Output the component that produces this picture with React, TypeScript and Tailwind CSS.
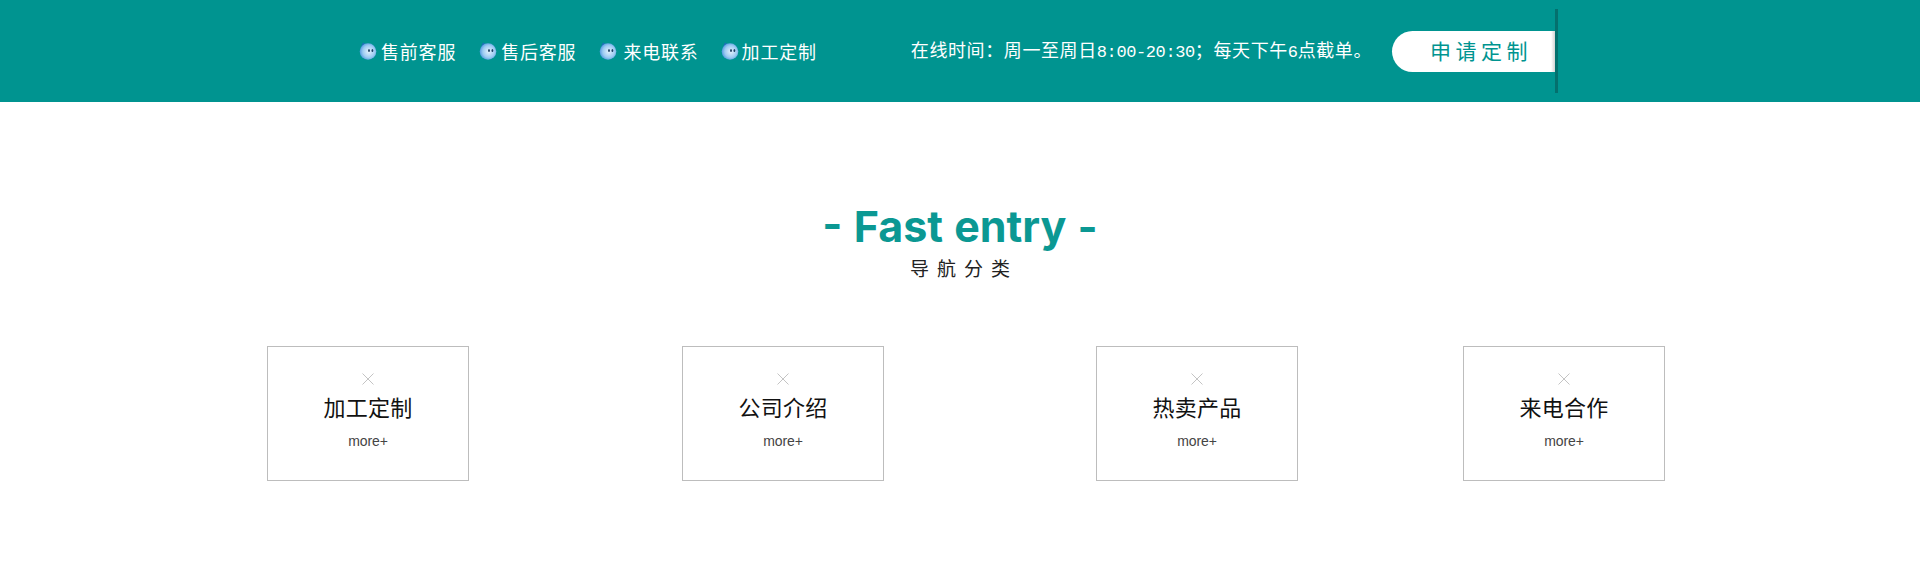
const CJK = "font-['Noto_Sans_CJK_SC','Liberation_Sans',sans-serif]";

const links = [
  { label: "售前客服", gap: "w-[4px]", next: "mr-[23px]" },
  { label: "售后客服", gap: "w-[4px]", next: "mr-[23px]" },
  { label: "来电联系", gap: "w-[6px]", next: "mr-[22px]" },
  { label: "加工定制", gap: "w-[3px]", next: "" },
];

const cards = [
  { title: "公司介绍", margin: "ml-[213px]" },
  { title: "热卖产品", margin: "ml-[212px]" },
  { title: "来电合作", margin: "ml-[165px]" },
];

function QqIcon() {
  return (
    <svg width="18" height="18" viewBox="0 0 18 18" className="shrink-0">
      <defs>
        <radialGradient id="ball" cx="0.55" cy="0.5" r="0.6">
          <stop offset="0" stopColor="#e4f2fd" />
          <stop offset="0.6" stopColor="#9ccbf2" />
          <stop offset="1" stopColor="#3f8ddb" />
        </radialGradient>
      </defs>
      <path d="M2 5 L4 0.5 L7 2.5 Z" fill="#1f6fb8" />
      <circle cx="9" cy="9.5" r="8.3" fill="url(#ball)" />
      <ellipse cx="10" cy="8.5" rx="0.9" ry="1.6" fill="#1d3f63" />
      <ellipse cx="13.4" cy="8.5" rx="0.9" ry="1.6" fill="#1d3f63" />
    </svg>
  );
}

function Card({ title, margin }: { title: string; margin?: string }) {
  return (
    <div className={`${margin ?? ""} flex h-[135px] w-[202px] flex-col items-center border border-[#bdbdbd] pt-[26px]`}>
      <svg width="12" height="12" viewBox="0 0 12 12" className="shrink-0">
        <path d="M0.5 0.5 L11.5 11.5 M11.5 0.5 L0.5 11.5" stroke="#b5b5b5" strokeWidth="0.8" fill="none" />
      </svg>
      <div className={`${CJK} mt-[6px] text-[22px] leading-[30px] tracking-[0.3px] text-[#111]`}>{title}</div>
      <div className="mt-[12px] font-['Liberation_Sans',sans-serif] text-[14px] leading-[16px] tracking-[-0.1px] text-[#444]">more+</div>
    </div>
  );
}

export default function App() {
  return (
    <div className={`${CJK} h-[585px] w-full overflow-hidden bg-white`}>
      <header className="flex h-[102px] items-center bg-[#009490] pl-[359px] text-white">
        <nav className="flex items-center">
          {links.map((link) => (
            <div key={link.label} className={`flex items-center ${link.next}`}>
              <QqIcon />
              <span className={link.gap} />
              <span className="text-[18px] leading-[26px] tracking-[0.8px]">{link.label}</span>
            </div>
          ))}
        </nav>
        <p className="ml-[94px] whitespace-nowrap text-[18px] leading-[26px] tracking-[0.6px]">
          在线时间：周一至周日
          <span className="font-['Liberation_Mono',monospace] text-[17px] tracking-[-0.4px]">8:00-20:30</span>
          ；每天下午
          <span className="font-['Liberation_Mono',monospace] text-[17px] tracking-[-0.4px]">6</span>
          点截单。
        </p>
        <a className="ml-[20px] flex h-[41px] w-[164px] items-center justify-center rounded-l-full bg-[linear-gradient(to_right,#ffffff_97%,#c9c9c9)] pl-[14px] text-[21px] tracking-[4.5px] text-[#009490]">
          申请定制
        </a>
        <span className="ml-[-1px] h-[84px] w-[3px] bg-[#04706e]" />
      </header>

      <section className="flex flex-col items-center pt-[98px]">
        <h2 className="font-['Inter',sans-serif] text-[43px] font-bold leading-[52px] [word-spacing:1px] text-[#0b9893]">
          - Fast entry -
        </h2>
        <p className="mt-[3px] pl-[8px] text-[19px] leading-[26px] tracking-[8px] text-[#222]">导航分类</p>
      </section>

      <section className="mt-[65px] flex pl-[267px]">
        <Card title="加工定制" />
        {cards.map((card) => (
          <Card key={card.title} title={card.title} margin={card.margin} />
        ))}
      </section>
    </div>
  );
}
